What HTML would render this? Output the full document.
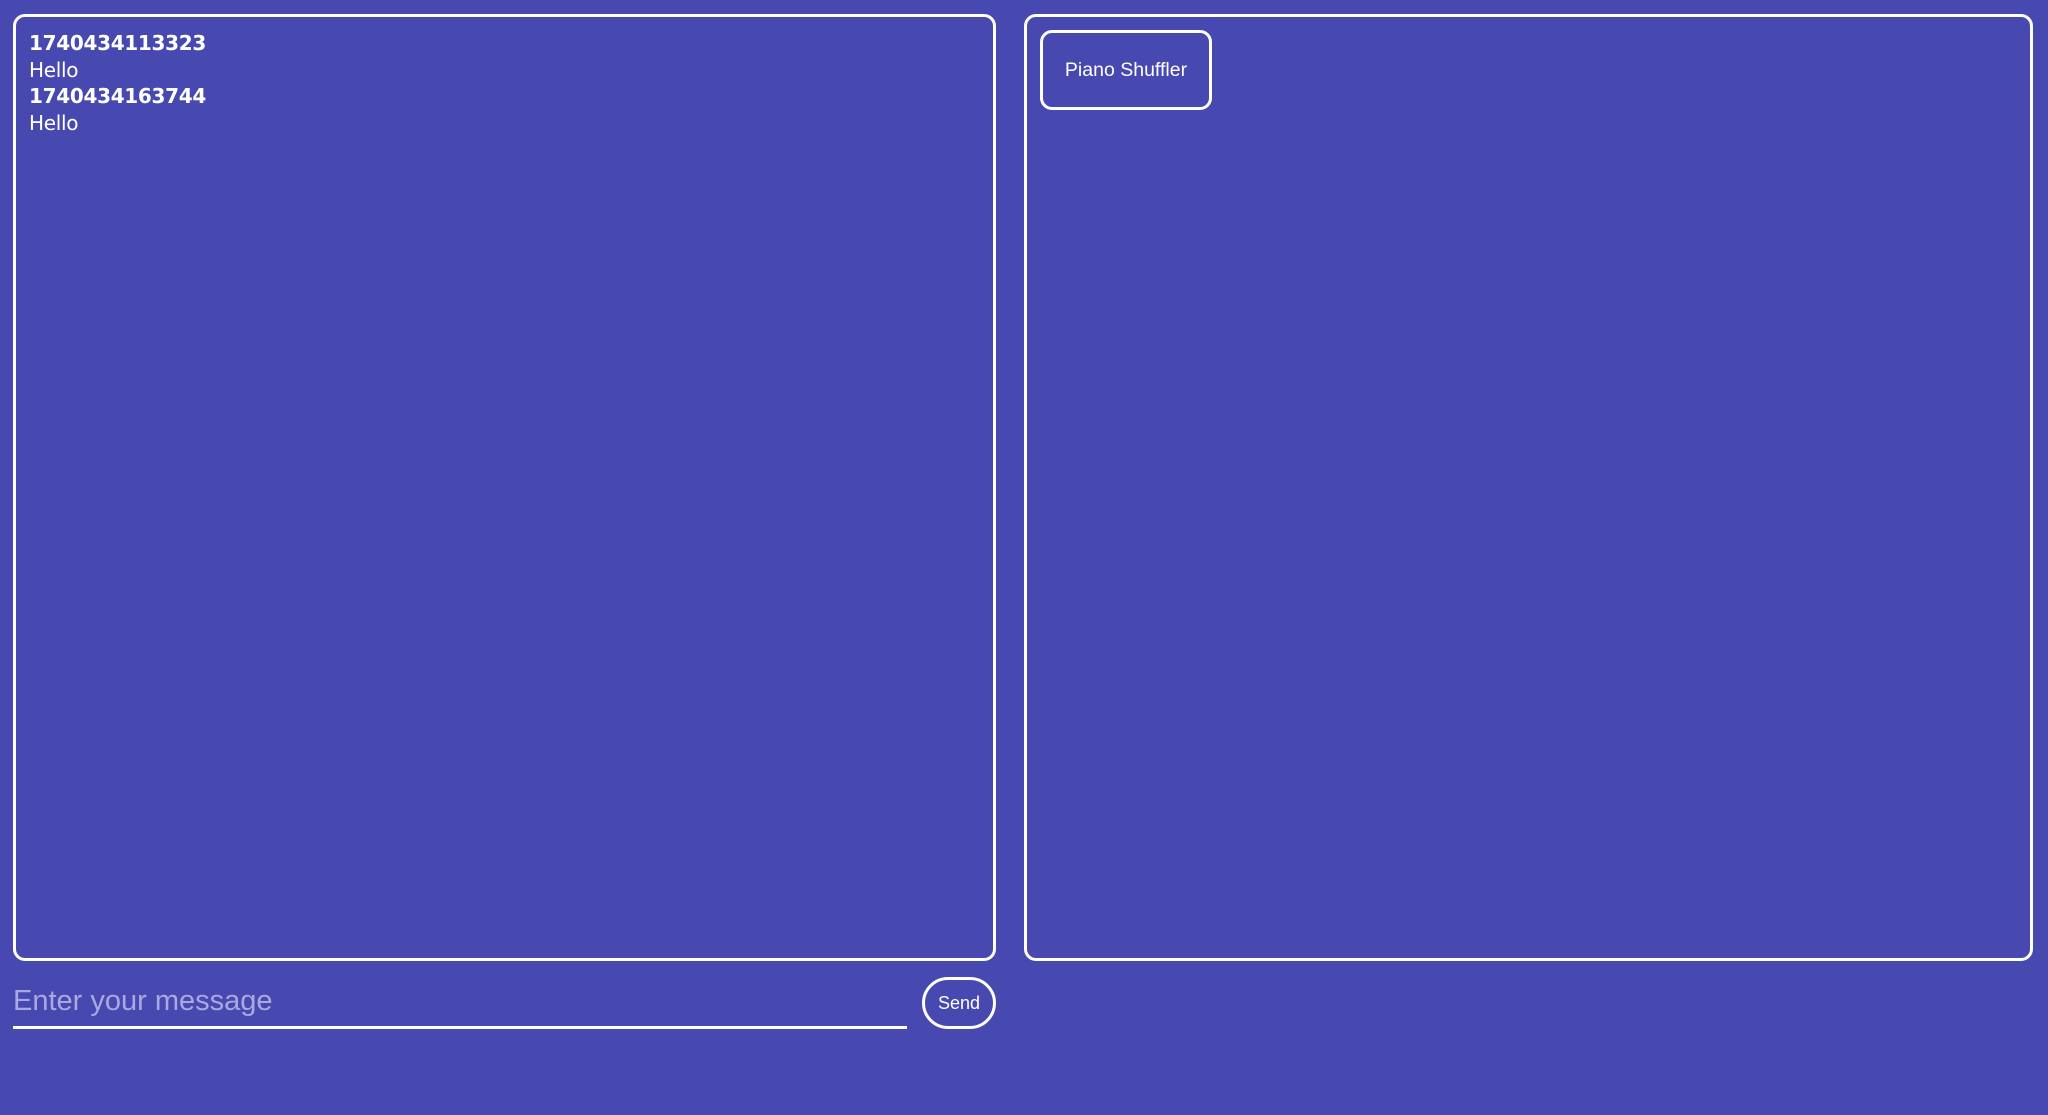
<!DOCTYPE html>
<html><head><meta charset="utf-8"><style>
html,body{margin:0;padding:0;width:2048px;height:1115px;background:#4749b0;overflow:hidden;}
.panel{position:absolute;border:3px solid #fff;border-radius:12px;box-sizing:border-box;}
#chat{left:13px;top:14px;width:983px;height:947px;padding:13px 0 0 13px;color:#fff;font-family:"DejaVu Sans","Liberation Sans",sans-serif;font-size:20px;letter-spacing:-0.3px;line-height:26.5px;}
#chat b{font-weight:bold;}
#right{left:1024px;top:14px;width:1009px;height:947px;}
.btn{position:absolute;border:3px solid #fff;box-sizing:border-box;color:#fff;font-family:"Liberation Sans",Arial,sans-serif;display:flex;align-items:center;justify-content:center;background:transparent;}
#piano{left:1040px;top:30px;width:172px;height:80px;border-radius:12px;font-size:19.5px;}
#send{left:922px;top:977px;width:74px;height:52px;border-radius:26px;font-size:18px;}
#input{position:absolute;left:13px;top:980px;width:894px;height:46px;border-bottom:3px solid #fff;color:#a7a9e0;font-family:"Liberation Sans",Arial,sans-serif;font-size:29px;line-height:42px;}
</style></head><body>
<div class="panel" id="chat"><b>1740434113323</b><br>Hello<br><b>1740434163744</b><br>Hello</div>
<div class="panel" id="right"></div>
<div class="btn" id="piano">Piano Shuffler</div>
<div id="input">Enter your message</div>
<div class="btn" id="send">Send</div>
</body></html>
